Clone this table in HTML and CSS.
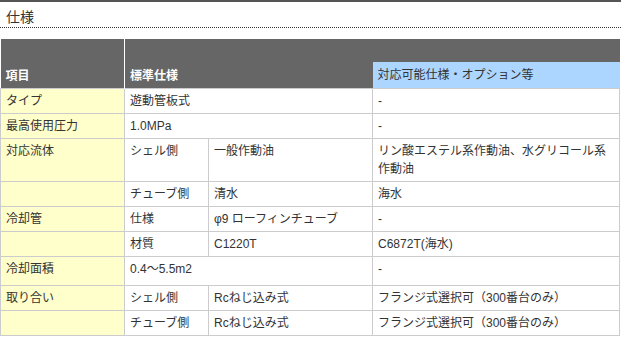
FILE: index.html
```html
<!DOCTYPE html>
<html lang="ja">
<head>
<meta charset="utf-8">
<link rel="stylesheet" href="styles.css">
</head>
<body>
<div class="topbar"></div>
<h2 class="title">仕様</h2>
<table class="spec">
  <colgroup>
    <col class="c1"><col class="c2"><col class="c3"><col class="c4">
  </colgroup>
  <thead>
    <tr class="h1">
      <th rowspan="2" class="hd first">項目</th>
      <th rowspan="2" colspan="2" class="hd">標準仕様</th>
      <th class="blank"></th>
    </tr>
    <tr class="h2">
      <th class="opt">対応可能仕様・オプション等</th>
    </tr>
  </thead>
  <tbody>
    <tr><td class="item">タイプ</td><td colspan="2">遊動管板式</td><td>-</td></tr>
    <tr><td class="item">最高使用圧力</td><td colspan="2">1.0MPa</td><td>-</td></tr>
    <tr><td class="item">対応流体</td><td>シェル側</td><td>一般作動油</td><td>リン酸エステル系作動油、水グリコール系作動油</td></tr>
    <tr><td class="item"></td><td>チューブ側</td><td>清水</td><td>海水</td></tr>
    <tr><td class="item">冷却管</td><td>仕様</td><td>φ9 ローフィンチューブ</td><td>-</td></tr>
    <tr><td class="item"></td><td>材質</td><td>C1220T</td><td>C6872T(海水)</td></tr>
    <tr class="tall"><td class="item">冷却面積</td><td colspan="2">0.4～5.5m2</td><td>-</td></tr>
    <tr><td class="item">取り合い</td><td>シェル側</td><td>Rcねじ込み式</td><td>フランジ式選択可（300番台のみ）</td></tr>
    <tr><td class="item"></td><td>チューブ側</td><td>Rcねじ込み式</td><td>フランジ式選択可（300番台のみ）</td></tr>
  </tbody>
</table>
</body>
</html>
```
FILE: styles.css
```css
html, body {
  margin: 0;
  padding: 0;
  background: #fff;
}
body {
  font-family: "Liberation Sans", "Noto Sans CJK JP", sans-serif;
  font-size: 12px;
  color: #333;
}
.topbar {
  height: 2px;
  background: #555;
}
.title {
  margin: 0;
  font-size: 14px;
  font-weight: normal;
  line-height: 18px;
  padding: 6px 6px 1px;
  color: #333;
  border-bottom: 1px dotted #333;
}
.spec {
  margin-top: 11px;
  width: 620px;
  border-collapse: collapse;
  table-layout: fixed;
}
.c1 { width: 124px; }
.c2 { width: 84px; }
.c3 { width: 164px; }
.spec th {
  background: #666;
  color: #fff;
  text-align: left;
  font-weight: bold;
  padding: 3px 5px 3px;
  line-height: 18px;
  border: 0;
}
.spec .hd { vertical-align: bottom; padding-bottom: 3px; }
.spec .first { border-right: 1px solid #fff; }
.spec .h1 { height: 23px; }
.spec .blank { padding: 0; }
.spec .opt {
  background: #acd5ff;
  color: #333;
  font-weight: normal;
  vertical-align: middle;
  height: 22px;
  padding: 2px 5px;
}
.spec td {
  border: 1px solid #ccc;
  padding: 3px 5px;
  line-height: 18px;
  vertical-align: top;
}
.spec .item { background: #ffffcc; }
.spec .tall td { height: 22px; }
```
